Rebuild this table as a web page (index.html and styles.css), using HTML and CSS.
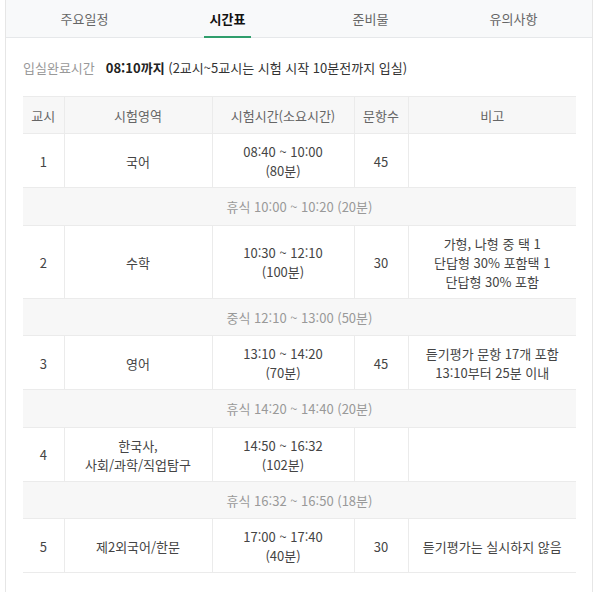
FILE: index.html
```html
<!DOCTYPE html>
<html lang="ko">
<head>
<meta charset="utf-8">
<link rel="stylesheet" href="styles.css">
</head>
<body>
<div class="box">
  <nav class="tabs">
    <div class="tab">주요일정</div>
    <div class="tab active"><span>시간표</span></div>
    <div class="tab">준비물</div>
    <div class="tab">유의사항</div>
  </nav>
  <div class="content">
    <p class="intro"><span class="label">입실완료시간</span><strong>08:10까지</strong> (2교시~5교시는 시험 시작 10분전까지 입실)</p>
    <table class="tt">
      <colgroup>
        <col class="c1"><col class="c2"><col class="c3"><col class="c4"><col class="c5">
      </colgroup>
      <thead>
        <tr><th>교시</th><th>시험영역</th><th>시험시간(소요시간)</th><th>문항수</th><th>비고</th></tr>
      </thead>
      <tbody>
        <tr><td>1</td><td>국어</td><td>08:40 ~ 10:00<br>(80분)</td><td>45</td><td></td></tr>
        <tr class="brk"><td colspan="5">휴식 10:00 ~ 10:20 (20분)</td></tr>
        <tr><td>2</td><td>수학</td><td>10:30 ~ 12:10<br>(100분)</td><td>30</td><td>가형, 나형 중 택 1<br>단답형 30% 포함택 1<br>단답형 30% 포함</td></tr>
        <tr class="brk"><td colspan="5">중식 12:10 ~ 13:00 (50분)</td></tr>
        <tr><td>3</td><td>영어</td><td>13:10 ~ 14:20<br>(70분)</td><td>45</td><td>듣기평가 문항 17개 포함<br>13:10부터 25분 이내</td></tr>
        <tr class="brk"><td colspan="5">휴식 14:20 ~ 14:40 (20분)</td></tr>
        <tr><td>4</td><td>한국사,<br>사회/과학/직업탐구</td><td>14:50 ~ 16:32<br>(102분)</td><td></td><td></td></tr>
        <tr class="brk"><td colspan="5">휴식 16:32 ~ 16:50 (18분)</td></tr>
        <tr><td>5</td><td>제2외국어/한문</td><td>17:00 ~ 17:40<br>(40분)</td><td>30</td><td>듣기평가는 실시하지 않음</td></tr>
      </tbody>
    </table>
  </div>
</div>
</body>
</html>
```

FILE: styles.css
```css
html, body {
  margin: 0;
  padding: 0;
  background: #fff;
}
body {
  font-family: "Noto Sans CJK KR", "Noto Sans", sans-serif;
  font-size: 13px;
  color: #333;
}
.box {
  margin-left: 5px;
  width: 586px;
  border: 1px solid #e6e6e6;
  border-top: none;
  height: 620px;
}
.tabs {
  display: flex;
  padding: 0 7px;
  height: 37px;
  background: #f8f9fa;
  border-bottom: 1px solid #e6e8ea;
}
.tab {
  flex: 1;
  display: flex;
  justify-content: center;
  align-items: center;
  color: #666;
  font-size: 13px;
}
.tab.active {
  align-items: stretch;
}
.tab.active span {
  display: flex;
  align-items: center;
  padding: 0 6px;
  font-weight: bold;
  color: #111;
  border-bottom: 2px solid #2f9e6c;
  margin-bottom: -1px;
}
.content {
  padding: 20px 16px 0 17px;
}
.intro {
  margin: 0 0 19px;
  line-height: 19px;
  color: #333;
}
.intro .label {
  color: #999;
  margin-right: 11px;
}
.intro strong {
  color: #222;
}
.tt {
  width: 553px;
  border-collapse: collapse;
  table-layout: fixed;
  text-align: center;
  line-height: 19px;
}
.c1 { width: 41px; }
.c2 { width: 148px; }
.c3 { width: 142px; }
.c4 { width: 54px; }
.c5 { width: 168px; }
.tt th {
  font-weight: normal;
  color: #666;
  background: #f7f7f7;
  padding: 9px 0 8px;
  border-top: 1px solid #ebebeb;
  border-bottom: 1px solid #ebebeb;
}
.tt td {
  padding: 8px 0 7px;
  border-bottom: 1px solid #ebebeb;
  color: #444;
}
.tt th + th,
.tt td + td {
  border-left: 1px solid #ebebeb;
}
.tt tr.brk td {
  background: #f7f7f7;
  color: #999;
  padding: 9px 0 8.5px;
}
```
